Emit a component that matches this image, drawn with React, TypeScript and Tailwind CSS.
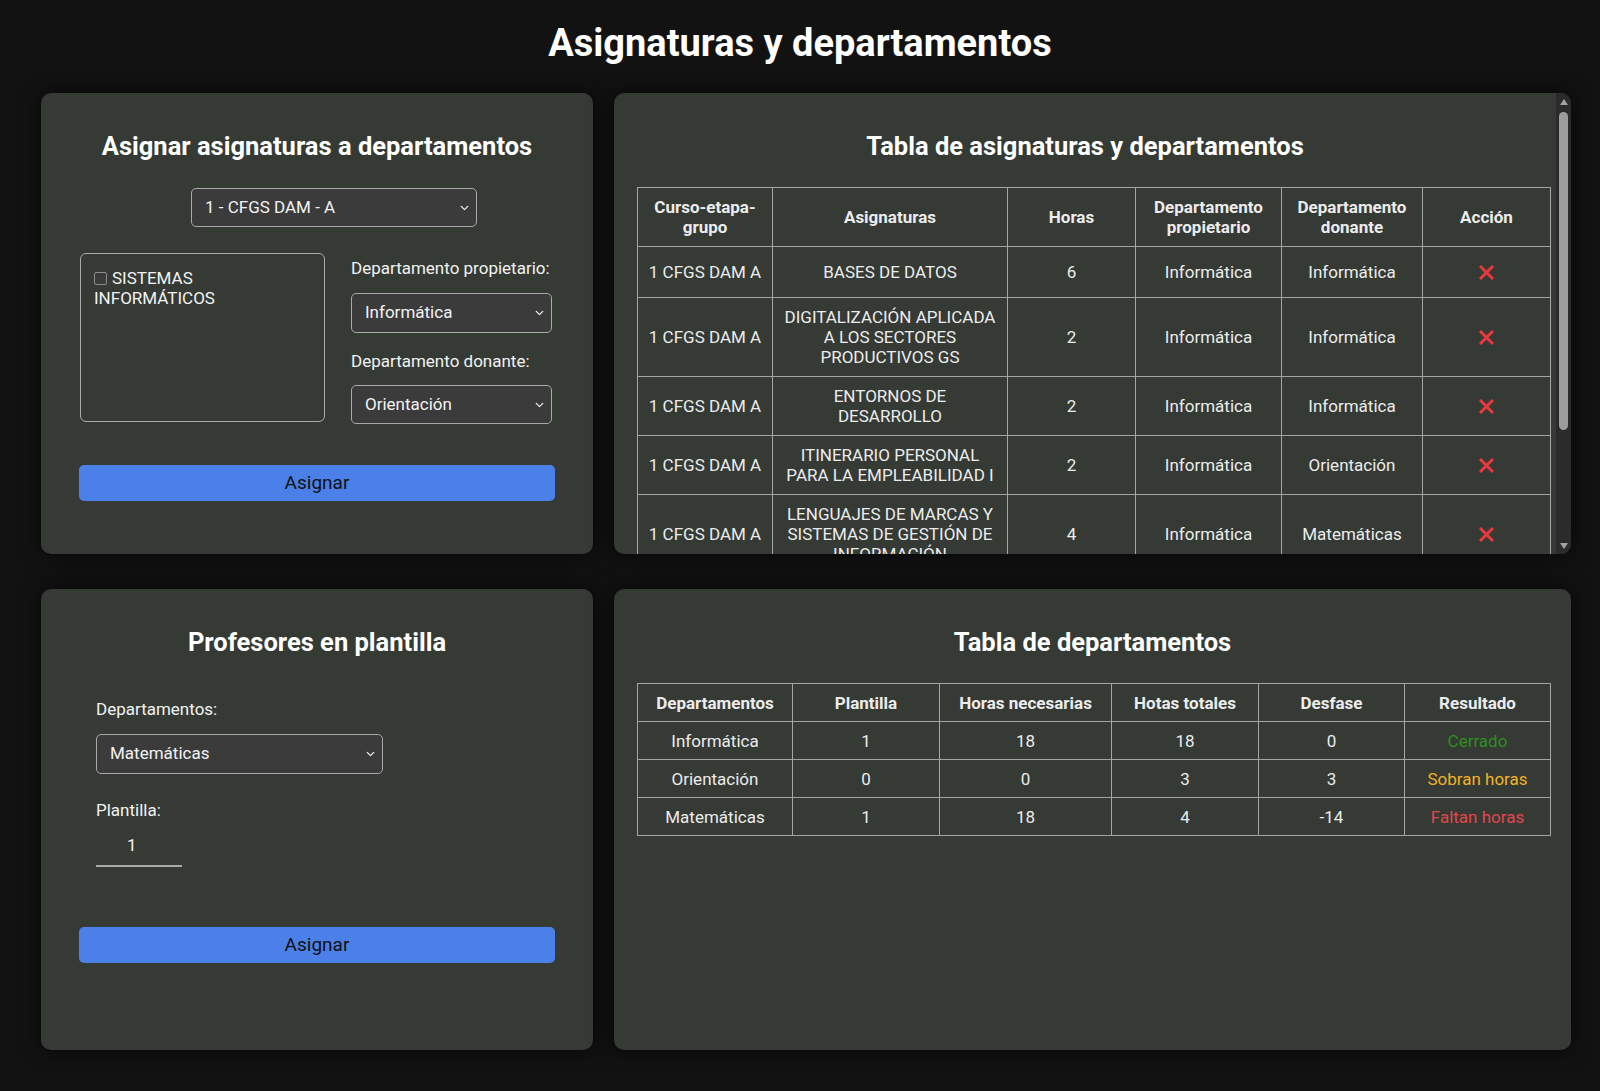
import { ChevronDown } from "lucide-react";

const font = { fontFamily: "Roboto, 'Noto Sans', Arial, sans-serif" };

type SubjectRow = {
  curso: string;
  asignatura: string[];
  horas: number;
  propietario: string;
  donante: string;
};

const subjects: SubjectRow[] = [
  { curso: "1 CFGS DAM A", asignatura: ["BASES DE DATOS"], horas: 6, propietario: "Informática", donante: "Informática" },
  {
    curso: "1 CFGS DAM A",
    asignatura: ["DIGITALIZACIÓN APLICADA", "A LOS SECTORES", "PRODUCTIVOS GS"],
    horas: 2,
    propietario: "Informática",
    donante: "Informática",
  },
  { curso: "1 CFGS DAM A", asignatura: ["ENTORNOS DE", "DESARROLLO"], horas: 2, propietario: "Informática", donante: "Informática" },
  {
    curso: "1 CFGS DAM A",
    asignatura: ["ITINERARIO PERSONAL", "PARA LA EMPLEABILIDAD I"],
    horas: 2,
    propietario: "Informática",
    donante: "Orientación",
  },
  {
    curso: "1 CFGS DAM A",
    asignatura: ["LENGUAJES DE MARCAS Y", "SISTEMAS DE GESTIÓN DE", "INFORMACIÓN"],
    horas: 4,
    propietario: "Informática",
    donante: "Matemáticas",
  },
];

const departments = [
  { name: "Informática", plantilla: 1, necesarias: 18, totales: 18, desfase: 0, resultado: "Cerrado", color: "text-[#2f8f1f]" },
  { name: "Orientación", plantilla: 0, necesarias: 0, totales: 3, desfase: 3, resultado: "Sobran horas", color: "text-[#f2b227]" },
  { name: "Matemáticas", plantilla: 1, necesarias: 18, totales: 4, desfase: -14, resultado: "Faltan horas", color: "text-[#e0474c]" },
];

function Select({ value, className }: { value: string; className: string }) {
  return (
    <div className={`relative ${className}`}>
      <select
        defaultValue={value}
        className="h-full w-full appearance-none rounded-[5px] border border-[#a9a9a9] bg-[#3b3b3b] pl-[13px] text-[17px] text-[#f2f2f2] outline-none"
        style={font}
      >
        <option>{value}</option>
      </select>
      <ChevronDown className="pointer-events-none absolute right-[6px] top-1/2 h-[13px] w-[13px] -translate-y-1/2 text-[#e8e8e8]" strokeWidth={2.5} />
    </div>
  );
}

function Card({ children, className = "" }: { children: React.ReactNode; className?: string }) {
  return (
    <div className={`h-[461px] rounded-[10px] bg-[#353a35] shadow-[0_0_22px_rgba(0,0,0,0.7)] ${className}`}>{children}</div>
  );
}

function CardTitle({ children }: { children: React.ReactNode }) {
  return <h2 className="text-center text-[25.5px] font-bold leading-[28px] text-white">{children}</h2>;
}

function Cross() {
  return (
    <svg width="15" height="15" viewBox="0 0 15 15" className="mx-auto block">
      <path d="M2 2 L13 13 M13 2 L2 13" stroke="#e8383d" strokeWidth="3" strokeLinecap="square" />
    </svg>
  );
}

function Scrollbar() {
  return (
    <div className="flex w-[15px] shrink-0 flex-col items-center bg-[#2b2b2b] pb-[5px] pt-[6px]">
      <svg width="8" height="6" viewBox="0 0 8 6">
        <path d="M4 0 L8 6 L0 6 Z" fill="#a3a3a3" />
      </svg>
      <div className="mt-[7px] h-[318px] w-[9px] rounded-full bg-[#9d9d9d]" />
      <div className="flex-1" />
      <svg width="8" height="6" viewBox="0 0 8 6">
        <path d="M0 0 L8 0 L4 6 Z" fill="#a3a3a3" />
      </svg>
    </div>
  );
}

const th = "border border-[#a3a6a3] px-[6px] font-bold leading-[20px]";
const td = "border border-[#a3a6a3] px-[6px] leading-[20px]";

export default function App() {
  return (
    <div className="min-h-screen w-full bg-[#121212] pt-[20px] text-[#ececec]" style={font}>
      <h1 className="mb-[26px] text-center text-[38px] font-bold leading-[47px] text-white">Asignaturas y departamentos</h1>

      <div className="grid grid-cols-[552px_957px] gap-x-[21px] gap-y-[35px] pl-[41px]">
        {/* Asignar asignaturas */}
        <Card className="px-[38px] pt-[39px]">
          <CardTitle>Asignar asignaturas a departamentos</CardTitle>
          <div className="mt-[28px] flex justify-center pl-[34px]">
            <Select value="1 - CFGS DAM - A" className="h-[39px] w-[286px]" />
          </div>
          <div className="mt-[26px] flex">
            <div className="ml-[1px] h-[169px] w-[245px] rounded-[6px] border border-[#a9a9a9] px-[13px] pt-[14px]">
              <label className="block w-[160px] text-[17px] leading-[20px] text-[#f2f2f2]">
                <span className="mr-[5px] inline-block h-[13px] w-[13px] rounded-[2px] border border-[#8c8c8c] bg-[#3b3b3b] align-[-1px]" />
                SISTEMAS INFORMÁTICOS
              </label>
            </div>
            <div className="ml-[26px] flex w-[201px] flex-col pt-[6px]">
              <span className="text-[17px] leading-[19px] text-[#f2f2f2]">Departamento propietario:</span>
              <Select value="Informática" className="mt-[15px] h-[40px] w-[201px]" />
              <span className="mt-[19px] text-[17px] leading-[19px] text-[#f2f2f2]">Departamento donante:</span>
              <Select value="Orientación" className="mt-[14px] h-[39px] w-[201px]" />
            </div>
          </div>
          <button className="mt-[41px] h-[36px] w-full rounded-[5px] bg-[#4a80e8] text-[19px] text-[#111]">Asignar</button>
        </Card>

        {/* Tabla de asignaturas */}
        <Card className="flex overflow-hidden">
          <div className="flex-1 overflow-hidden pt-[39px]">
            <CardTitle>Tabla de asignaturas y departamentos</CardTitle>
            <table className="ml-[23px] mt-[27px] w-[913px] table-fixed border-collapse text-center text-[17px] text-[#ececec]">
              <colgroup>
                <col className="w-[135px]" />
                <col className="w-[235px]" />
                <col className="w-[128px]" />
                <col className="w-[146px]" />
                <col className="w-[141px]" />
                <col className="w-[128px]" />
              </colgroup>
              <thead>
                <tr>
                  <th className={`${th} py-[9px]`}>
                    Curso-etapa-
                    <br />
                    grupo
                  </th>
                  <th className={`${th} py-[9px]`}>Asignaturas</th>
                  <th className={`${th} py-[9px]`}>Horas</th>
                  <th className={`${th} py-[9px]`}>
                    Departamento
                    <br />
                    propietario
                  </th>
                  <th className={`${th} py-[9px]`}>
                    Departamento
                    <br />
                    donante
                  </th>
                  <th className={`${th} py-[9px]`}>Acción</th>
                </tr>
              </thead>
              <tbody>
                {subjects.map((s, i) => (
                  <tr key={i}>
                    <td className={`${td} py-[9px]`}>{s.curso}</td>
                    <td className={`${td} py-[9px]`}>
                      {s.asignatura.map((line, j) => (
                        <div key={j}>{line}</div>
                      ))}
                    </td>
                    <td className={`${td} py-[9px]`}>{s.horas}</td>
                    <td className={`${td} py-[9px]`}>{s.propietario}</td>
                    <td className={`${td} py-[9px]`}>{s.donante}</td>
                    <td className={`${td} py-[9px]`}>
                      <button className="flex h-[32px] w-full items-center justify-center">
                        <Cross />
                      </button>
                    </td>
                  </tr>
                ))}
              </tbody>
            </table>
          </div>
          <Scrollbar />
        </Card>

        {/* Profesores en plantilla */}
        <Card className="px-[38px] pt-[39px]">
          <CardTitle>Profesores en plantilla</CardTitle>
          <div className="mt-[44px] flex flex-col px-[17px]">
            <span className="text-[17px] leading-[19px] text-[#f2f2f2]">Departamentos:</span>
            <Select value="Matemáticas" className="mt-[15px] h-[40px] w-[287px]" />
            <span className="mt-[27px] text-[17px] leading-[19px] text-[#f2f2f2]">Plantilla:</span>
            <input
              defaultValue="1"
              className="mt-[5px] h-[42px] w-[86px] border-b-2 border-[#a9a9a9] bg-transparent pl-[31px] text-[17px] text-[#f2f2f2] outline-none"
              style={font}
            />
          </div>
          <button className="mt-[60px] h-[36px] w-full rounded-[5px] bg-[#4a80e8] text-[19px] text-[#111]">Asignar</button>
        </Card>

        {/* Tabla de departamentos */}
        <Card className="pt-[39px]">
          <CardTitle>Tabla de departamentos</CardTitle>
          <table className="ml-[23px] mt-[27px] w-[913px] table-fixed border-collapse text-center text-[17px] text-[#ececec]">
            <colgroup>
              <col className="w-[155px]" />
              <col className="w-[147px]" />
              <col className="w-[172px]" />
              <col className="w-[147px]" />
              <col className="w-[146px]" />
              <col className="w-[146px]" />
            </colgroup>
            <thead>
              <tr>
                <th className={`${th} py-[8.5px]`}>Departamentos</th>
                <th className={`${th} py-[8.5px]`}>Plantilla</th>
                <th className={`${th} py-[8.5px]`}>Horas necesarias</th>
                <th className={`${th} py-[8.5px]`}>Hotas totales</th>
                <th className={`${th} py-[8.5px]`}>Desfase</th>
                <th className={`${th} py-[8.5px]`}>Resultado</th>
              </tr>
            </thead>
            <tbody>
              {departments.map((d) => (
                <tr key={d.name}>
                  <td className={`${td} py-[8.5px]`}>{d.name}</td>
                  <td className={`${td} py-[8.5px]`}>{d.plantilla}</td>
                  <td className={`${td} py-[8.5px]`}>{d.necesarias}</td>
                  <td className={`${td} py-[8.5px]`}>{d.totales}</td>
                  <td className={`${td} py-[8.5px]`}>{d.desfase}</td>
                  <td className={`${td} py-[8.5px] ${d.color}`}>{d.resultado}</td>
                </tr>
              ))}
            </tbody>
          </table>
        </Card>
      </div>
    </div>
  );
}
